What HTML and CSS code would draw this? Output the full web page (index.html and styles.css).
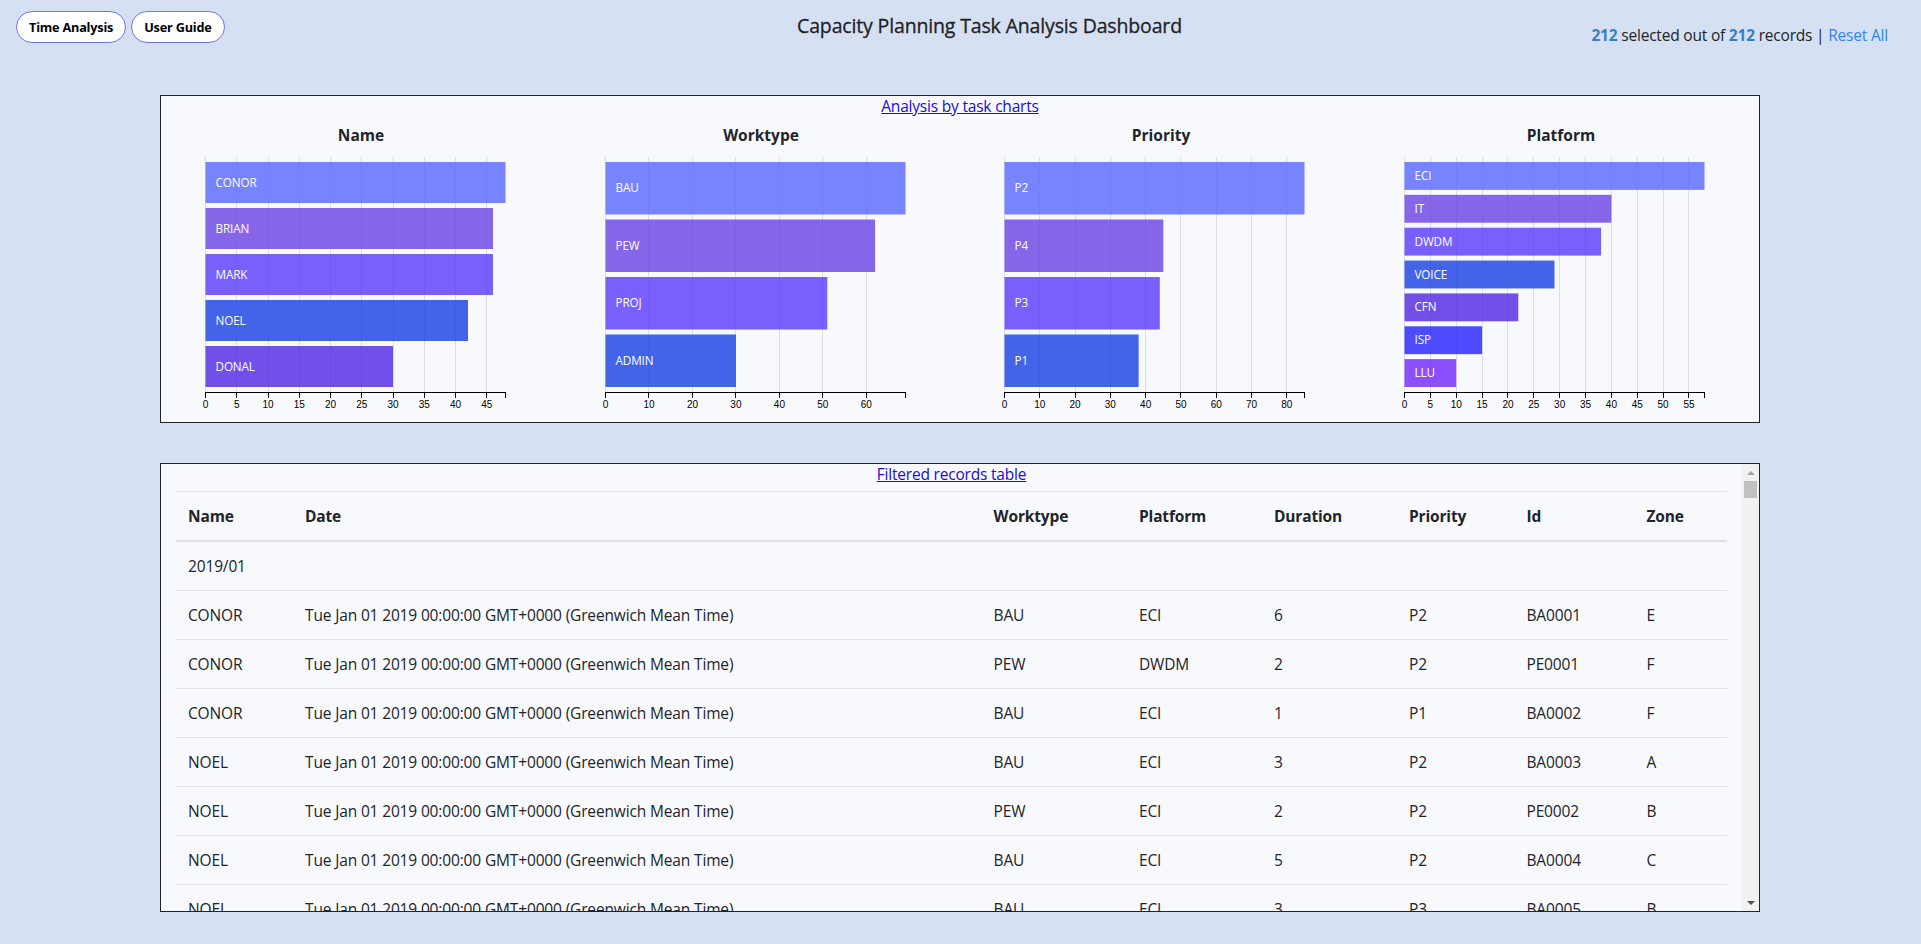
FILE: index.html
```html
<!DOCTYPE html>
<html lang="en">
<head>
<meta charset="utf-8">
<title>Capacity Planning Task Analysis Dashboard</title>
<link rel="stylesheet" href="styles.css">
</head>
<body>
<header class="top">
  <div class="top-left">
    <button class="pill">Time Analysis</button>
    <button class="pill">User Guide</button>
  </div>
  <h1 class="title">Capacity Planning Task Analysis Dashboard</h1>
  <div class="top-right">
    <span class="count">212</span> selected out of <span class="count">212</span> records | <a class="reset" href="#">Reset All</a>
  </div>
</header>

<section class="panel charts">
  <a class="panel-link" href="#">Analysis by task charts</a>
  <div class="chart-grid">
    <div class="chart">
      <div class="chart-title">Name</div>
      <svg class="row-chart" width="400" height="275" viewBox="0 0 400 275">
        <g transform="translate(44.5,10)">
          <g class="grid">
            <line x1="0" x2="0" y1="0" y2="235"/><line x1="31.25" x2="31.25" y1="0" y2="235"/><line x1="62.5" x2="62.5" y1="0" y2="235"/><line x1="93.75" x2="93.75" y1="0" y2="235"/><line x1="125" x2="125" y1="0" y2="235"/><line x1="156.25" x2="156.25" y1="0" y2="235"/><line x1="187.5" x2="187.5" y1="0" y2="235"/><line x1="218.75" x2="218.75" y1="0" y2="235"/><line x1="250" x2="250" y1="0" y2="235"/><line x1="281.25" x2="281.25" y1="0" y2="235"/>
          </g>
          <g class="bars">
            <rect class="c1" x="0" y="5" width="300" height="41"/><text x="10" y="25.5" dy=".35em">CONOR</text>
            <rect class="c2" x="0" y="51" width="287.5" height="41"/><text x="10" y="71.5" dy=".35em">BRIAN</text>
            <rect class="c3" x="0" y="97" width="287.5" height="41"/><text x="10" y="117.5" dy=".35em">MARK</text>
            <rect class="c4" x="0" y="143" width="262.5" height="41"/><text x="10" y="163.5" dy=".35em">NOEL</text>
            <rect class="c5" x="0" y="189" width="187.5" height="41"/><text x="10" y="209.5" dy=".35em">DONAL</text>
          </g>
          <g class="axis" transform="translate(0,235)">
            <path d="M0,6V0H300V6"/>
            <g class="ticks">
              <line x1="0" x2="0" y2="6"/><line x1="31.25" x2="31.25" y2="6"/><line x1="62.5" x2="62.5" y2="6"/><line x1="93.75" x2="93.75" y2="6"/><line x1="125" x2="125" y2="6"/><line x1="156.25" x2="156.25" y2="6"/><line x1="187.5" x2="187.5" y2="6"/><line x1="218.75" x2="218.75" y2="6"/><line x1="250" x2="250" y2="6"/><line x1="281.25" x2="281.25" y2="6"/>
            </g>
            <g class="tick-labels">
              <text x="0" y="9" dy=".71em">0</text><text x="31.25" y="9" dy=".71em">5</text><text x="62.5" y="9" dy=".71em">10</text><text x="93.75" y="9" dy=".71em">15</text><text x="125" y="9" dy=".71em">20</text><text x="156.25" y="9" dy=".71em">25</text><text x="187.5" y="9" dy=".71em">30</text><text x="218.75" y="9" dy=".71em">35</text><text x="250" y="9" dy=".71em">40</text><text x="281.25" y="9" dy=".71em">45</text>
            </g>
          </g>
        </g>
      </svg>
    </div>

    <div class="chart">
      <div class="chart-title">Worktype</div>
      <svg class="row-chart" width="400" height="275" viewBox="0 0 400 275">
        <g transform="translate(44.5,10)">
          <g class="grid">
            <line x1="0" x2="0" y1="0" y2="235"/><line x1="43.48" x2="43.48" y1="0" y2="235"/><line x1="86.96" x2="86.96" y1="0" y2="235"/><line x1="130.43" x2="130.43" y1="0" y2="235"/><line x1="173.91" x2="173.91" y1="0" y2="235"/><line x1="217.39" x2="217.39" y1="0" y2="235"/><line x1="260.87" x2="260.87" y1="0" y2="235"/>
          </g>
          <g class="bars">
            <rect class="c1" x="0" y="5" width="300" height="52.5"/><text x="10" y="31.25" dy=".35em">BAU</text>
            <rect class="c2" x="0" y="62.5" width="269.57" height="52.5"/><text x="10" y="88.75" dy=".35em">PEW</text>
            <rect class="c3" x="0" y="120" width="221.74" height="52.5"/><text x="10" y="146.25" dy=".35em">PROJ</text>
            <rect class="c4" x="0" y="177.5" width="130.43" height="52.5"/><text x="10" y="203.75" dy=".35em">ADMIN</text>
          </g>
          <g class="axis" transform="translate(0,235)">
            <path d="M0,6V0H300V6"/>
            <g class="ticks">
              <line x1="0" x2="0" y2="6"/><line x1="43.48" x2="43.48" y2="6"/><line x1="86.96" x2="86.96" y2="6"/><line x1="130.43" x2="130.43" y2="6"/><line x1="173.91" x2="173.91" y2="6"/><line x1="217.39" x2="217.39" y2="6"/><line x1="260.87" x2="260.87" y2="6"/>
            </g>
            <g class="tick-labels">
              <text x="0" y="9" dy=".71em">0</text><text x="43.48" y="9" dy=".71em">10</text><text x="86.96" y="9" dy=".71em">20</text><text x="130.43" y="9" dy=".71em">30</text><text x="173.91" y="9" dy=".71em">40</text><text x="217.39" y="9" dy=".71em">50</text><text x="260.87" y="9" dy=".71em">60</text>
            </g>
          </g>
        </g>
      </svg>
    </div>

    <div class="chart">
      <div class="chart-title">Priority</div>
      <svg class="row-chart" width="400" height="275" viewBox="0 0 400 275">
        <g transform="translate(43.5,10)">
          <g class="grid">
            <line x1="0" x2="0" y1="0" y2="235"/><line x1="35.29" x2="35.29" y1="0" y2="235"/><line x1="70.59" x2="70.59" y1="0" y2="235"/><line x1="105.88" x2="105.88" y1="0" y2="235"/><line x1="141.18" x2="141.18" y1="0" y2="235"/><line x1="176.47" x2="176.47" y1="0" y2="235"/><line x1="211.76" x2="211.76" y1="0" y2="235"/><line x1="247.06" x2="247.06" y1="0" y2="235"/><line x1="282.35" x2="282.35" y1="0" y2="235"/>
          </g>
          <g class="bars">
            <rect class="c1" x="0" y="5" width="300" height="52.5"/><text x="10" y="31.25" dy=".35em">P2</text>
            <rect class="c2" x="0" y="62.5" width="158.82" height="52.5"/><text x="10" y="88.75" dy=".35em">P4</text>
            <rect class="c3" x="0" y="120" width="155.29" height="52.5"/><text x="10" y="146.25" dy=".35em">P3</text>
            <rect class="c4" x="0" y="177.5" width="134.12" height="52.5"/><text x="10" y="203.75" dy=".35em">P1</text>
          </g>
          <g class="axis" transform="translate(0,235)">
            <path d="M0,6V0H300V6"/>
            <g class="ticks">
              <line x1="0" x2="0" y2="6"/><line x1="35.29" x2="35.29" y2="6"/><line x1="70.59" x2="70.59" y2="6"/><line x1="105.88" x2="105.88" y2="6"/><line x1="141.18" x2="141.18" y2="6"/><line x1="176.47" x2="176.47" y2="6"/><line x1="211.76" x2="211.76" y2="6"/><line x1="247.06" x2="247.06" y2="6"/><line x1="282.35" x2="282.35" y2="6"/>
            </g>
            <g class="tick-labels">
              <text x="0" y="9" dy=".71em">0</text><text x="35.29" y="9" dy=".71em">10</text><text x="70.59" y="9" dy=".71em">20</text><text x="105.88" y="9" dy=".71em">30</text><text x="141.18" y="9" dy=".71em">40</text><text x="176.47" y="9" dy=".71em">50</text><text x="211.76" y="9" dy=".71em">60</text><text x="247.06" y="9" dy=".71em">70</text><text x="282.35" y="9" dy=".71em">80</text>
            </g>
          </g>
        </g>
      </svg>
    </div>

    <div class="chart">
      <div class="chart-title">Platform</div>
      <svg class="row-chart" width="400" height="275" viewBox="0 0 400 275">
        <g transform="translate(43.5,10)">
          <g class="grid">
            <line x1="0" x2="0" y1="0" y2="235"/><line x1="25.86" x2="25.86" y1="0" y2="235"/><line x1="51.72" x2="51.72" y1="0" y2="235"/><line x1="77.59" x2="77.59" y1="0" y2="235"/><line x1="103.45" x2="103.45" y1="0" y2="235"/><line x1="129.31" x2="129.31" y1="0" y2="235"/><line x1="155.17" x2="155.17" y1="0" y2="235"/><line x1="181.03" x2="181.03" y1="0" y2="235"/><line x1="206.9" x2="206.9" y1="0" y2="235"/><line x1="232.76" x2="232.76" y1="0" y2="235"/><line x1="258.62" x2="258.62" y1="0" y2="235"/><line x1="284.48" x2="284.48" y1="0" y2="235"/>
          </g>
          <g class="bars">
            <rect class="c1" x="0" y="5" width="300" height="27.86"/><text x="10" y="18.93" dy=".35em">ECI</text>
            <rect class="c2" x="0" y="37.86" width="206.9" height="27.86"/><text x="10" y="51.79" dy=".35em">IT</text>
            <rect class="c3" x="0" y="70.71" width="196.55" height="27.86"/><text x="10" y="84.64" dy=".35em">DWDM</text>
            <rect class="c4" x="0" y="103.57" width="150" height="27.86"/><text x="10" y="117.5" dy=".35em">VOICE</text>
            <rect class="c5" x="0" y="136.43" width="113.79" height="27.86"/><text x="10" y="150.36" dy=".35em">CFN</text>
            <rect class="c6" x="0" y="169.29" width="77.59" height="27.86"/><text x="10" y="183.21" dy=".35em">ISP</text>
            <rect class="c7" x="0" y="202.14" width="51.72" height="27.86"/><text x="10" y="216.07" dy=".35em">LLU</text>
          </g>
          <g class="axis" transform="translate(0,235)">
            <path d="M0,6V0H300V6"/>
            <g class="ticks">
              <line x1="0" x2="0" y2="6"/><line x1="25.86" x2="25.86" y2="6"/><line x1="51.72" x2="51.72" y2="6"/><line x1="77.59" x2="77.59" y2="6"/><line x1="103.45" x2="103.45" y2="6"/><line x1="129.31" x2="129.31" y2="6"/><line x1="155.17" x2="155.17" y2="6"/><line x1="181.03" x2="181.03" y2="6"/><line x1="206.9" x2="206.9" y2="6"/><line x1="232.76" x2="232.76" y2="6"/><line x1="258.62" x2="258.62" y2="6"/><line x1="284.48" x2="284.48" y2="6"/>
            </g>
            <g class="tick-labels">
              <text x="0" y="9" dy=".71em">0</text><text x="25.86" y="9" dy=".71em">5</text><text x="51.72" y="9" dy=".71em">10</text><text x="77.59" y="9" dy=".71em">15</text><text x="103.45" y="9" dy=".71em">20</text><text x="129.31" y="9" dy=".71em">25</text><text x="155.17" y="9" dy=".71em">30</text><text x="181.03" y="9" dy=".71em">35</text><text x="206.9" y="9" dy=".71em">40</text><text x="232.76" y="9" dy=".71em">45</text><text x="258.62" y="9" dy=".71em">50</text><text x="284.48" y="9" dy=".71em">55</text>
            </g>
          </g>
        </g>
      </svg>
    </div>
  </div>
</section>

<section class="panel records">
  <div class="records-body">
    <a class="panel-link" href="#">Filtered records table</a>
    <table class="data-table">
      <colgroup>
        <col class="w-name"><col class="w-date"><col class="w-work"><col class="w-plat"><col class="w-dur"><col class="w-prio"><col class="w-id"><col class="w-zone">
      </colgroup>
      <thead>
        <tr><th>Name</th><th>Date</th><th>Worktype</th><th>Platform</th><th>Duration</th><th>Priority</th><th>Id</th><th>Zone</th></tr>
      </thead>
      <tbody>
        <tr class="group"><td colspan="8">2019/01</td></tr>
        <tr><td>CONOR</td><td>Tue Jan 01 2019 00:00:00 GMT+0000 (Greenwich Mean Time)</td><td>BAU</td><td>ECI</td><td>6</td><td>P2</td><td>BA0001</td><td>E</td></tr>
        <tr><td>CONOR</td><td>Tue Jan 01 2019 00:00:00 GMT+0000 (Greenwich Mean Time)</td><td>PEW</td><td>DWDM</td><td>2</td><td>P2</td><td>PE0001</td><td>F</td></tr>
        <tr><td>CONOR</td><td>Tue Jan 01 2019 00:00:00 GMT+0000 (Greenwich Mean Time)</td><td>BAU</td><td>ECI</td><td>1</td><td>P1</td><td>BA0002</td><td>F</td></tr>
        <tr><td>NOEL</td><td>Tue Jan 01 2019 00:00:00 GMT+0000 (Greenwich Mean Time)</td><td>BAU</td><td>ECI</td><td>3</td><td>P2</td><td>BA0003</td><td>A</td></tr>
        <tr><td>NOEL</td><td>Tue Jan 01 2019 00:00:00 GMT+0000 (Greenwich Mean Time)</td><td>PEW</td><td>ECI</td><td>2</td><td>P2</td><td>PE0002</td><td>B</td></tr>
        <tr><td>NOEL</td><td>Tue Jan 01 2019 00:00:00 GMT+0000 (Greenwich Mean Time)</td><td>BAU</td><td>ECI</td><td>5</td><td>P2</td><td>BA0004</td><td>C</td></tr>
        <tr><td>NOEL</td><td>Tue Jan 01 2019 00:00:00 GMT+0000 (Greenwich Mean Time)</td><td>BAU</td><td>ECI</td><td>3</td><td>P3</td><td>BA0005</td><td>B</td></tr>
        <tr><td>BRIAN</td><td>Tue Jan 01 2019 00:00:00 GMT+0000 (Greenwich Mean Time)</td><td>PROJ</td><td>IT</td><td>4</td><td>P4</td><td>PR0001</td><td>D</td></tr>
      </tbody>
    </table>
  </div>
  <div class="scrollbar" aria-hidden="true">
    <div class="sb-btn"><span class="arrow-up"></span></div>
    <div class="sb-track"><div class="sb-thumb"></div></div>
    <div class="sb-btn"><span class="arrow-down"></span></div>
  </div>
</section>
</body>
</html>
```

FILE: styles.css
```css
* { box-sizing: border-box; }

html, body {
  margin: 0;
  padding: 0;
}

body {
  background: #d5e0f3;
  font-family: "Open Sans", "Noto Sans", sans-serif;
  font-size: 16px;
  color: #212529;
  width: 1921px;
  height: 944px;
  overflow: hidden;
}

/* ---------- header ---------- */
.top {
  display: flex;
  align-items: flex-start;
  height: 95px;
  padding: 11px 33px 0 16px;
}

.top-left {
  flex: 1 1 0;
  display: flex;
  gap: 5px;
}

.pill {
  height: 32px;
  padding: 0 12px;
  border: 1px solid #6f74e6;
  border-radius: 16px;
  background: #ffffff;
  color: #000000;
  font-family: "Open Sans", sans-serif;
  font-weight: 700;
  font-size: 12.7px;
  line-height: 30px;
  letter-spacing: -0.2px;
}

.title {
  margin: 1px 0 0 75px;
  font-size: 19.5px;
  font-weight: 400;
  line-height: 27px;
  color: #1f2226;
  letter-spacing: -0.15px;
  -webkit-text-stroke: 0.3px #1f2226;
}

.top-right {
  flex: 1 1 0;
  text-align: right;
  margin-top: 14px;
  font-size: 15.5px;
  line-height: 21px;
  color: #212529;
  letter-spacing: -0.2px;
}

.count {
  font-weight: 700;
  color: #3a7fc1;
}

.reset {
  color: #2f86ee;
  text-decoration: none;
}

/* ---------- panels ---------- */
.panel {
  width: 1600px;
  margin-left: 160px;
  background: #f8f9fd;
  border: 1px solid #222428;
}

.panel-link {
  display: block;
  text-align: center;
  color: #1a0dd6;
  text-decoration: underline;
  font-size: 15.5px;
  line-height: 21px;
  letter-spacing: -0.2px;
}

.charts {
  height: 328px;
}

.chart-grid {
  display: grid;
  grid-template-columns: repeat(4, 1fr);
}

.chart {
  display: flex;
  flex-direction: column;
  align-items: stretch;
}

.chart-title {
  margin-top: 6px;
  text-align: center;
  font-weight: 700;
  font-size: 15.5px;
  line-height: 24px;
  color: #212529;
}

.row-chart {
  display: block;
  overflow: visible;
}

.grid line {
  stroke: #cccccc;
  stroke-opacity: 0.6;
  shape-rendering: crispEdges;
}

.bars rect { fill-opacity: 0.8; }
.bars .c1 { fill: #5766fe; }
.bars .c2 { fill: #6841e3; }
.bars .c3 { fill: #5738fe; }
.bars .c4 { fill: #153fe4; }
.bars .c5 { fill: #4f24e4; }
.bars .c6 { fill: #2020fe; }
.bars .c7 { fill: #7024fe; }

.bars text {
  fill: #ffffff;
  font-family: "Open Sans", sans-serif;
  font-size: 11.7px;
  letter-spacing: -0.1px;
}

.axis path,
.axis line {
  fill: none;
  stroke: #000000;
  shape-rendering: crispEdges;
}

.tick-labels text {
  font-family: "Liberation Sans", Arial, sans-serif;
  font-size: 10px;
  text-anchor: middle;
  fill: #000000;
}

/* ---------- records ---------- */
.records {
  margin-top: 40px;
  height: 449px;
  display: flex;
  overflow: hidden;
}

.records-body {
  flex: 1 1 auto;
  min-width: 0;
  overflow: hidden;
  padding: 0 15px;
}

.data-table {
  width: 1551px;
  margin-top: 6px;
  border-collapse: collapse;
  table-layout: fixed;
  color: #212529;
}

.w-name { width: 117px; }
.w-date { width: 688.6px; }
.w-work { width: 145.4px; }
.w-plat { width: 135px; }
.w-dur  { width: 135px; }
.w-prio { width: 117.5px; }
.w-id   { width: 120px; }
.w-zone { width: 92.5px; }

.data-table th,
.data-table td {
  padding: 12px;
  text-align: left;
  line-height: 24px;
  font-size: 15.5px;
  letter-spacing: -0.15px;
  white-space: nowrap;
  border-top: 1px solid #dee2e6;
  vertical-align: top;
}

.data-table th {
  font-weight: 700;
  border-bottom: 2px solid #dee2e6;
}

/* fake classic scrollbar */
.scrollbar {
  flex: 0 0 17px;
  width: 17px;
  background: #f1f1f1;
  display: flex;
  flex-direction: column;
}

.sb-btn {
  height: 17px;
  display: flex;
  align-items: center;
  justify-content: center;
}

.sb-track {
  flex: 1 1 auto;
  padding: 0 2px;
}

.sb-thumb {
  height: 17px;
  background: #c1c1c1;
}

.arrow-up {
  width: 0;
  height: 0;
  border-left: 4px solid transparent;
  border-right: 4px solid transparent;
  border-bottom: 4px solid #a3a3a3;
}

.arrow-down {
  width: 0;
  height: 0;
  border-left: 4px solid transparent;
  border-right: 4px solid transparent;
  border-top: 4px solid #505050;
}
```
